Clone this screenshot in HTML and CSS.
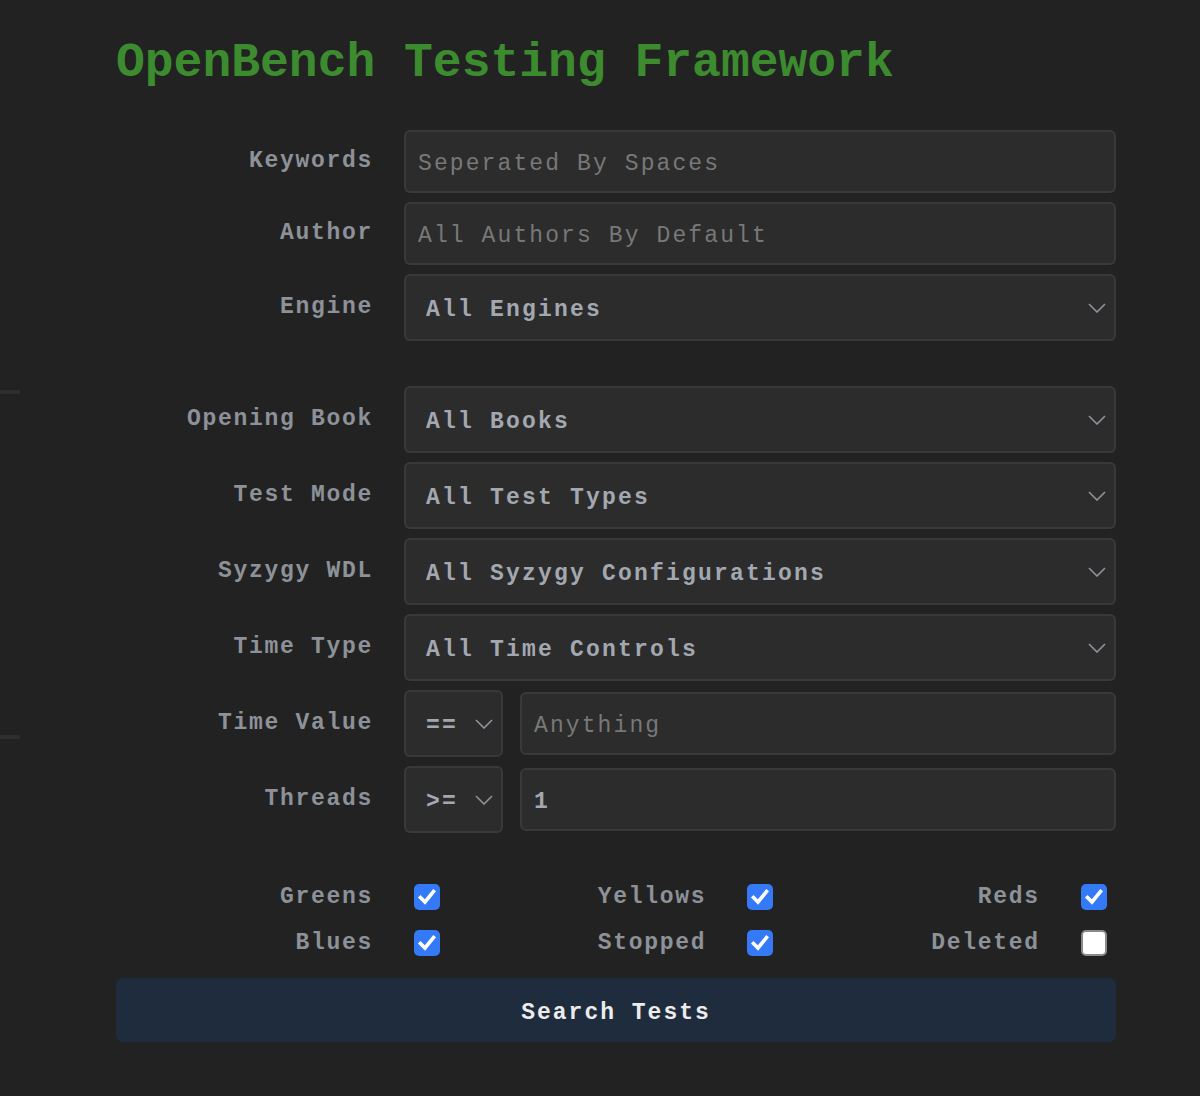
FILE: index.html
```html
<!DOCTYPE html>
<html>
<head>
<meta charset="utf-8">
<link rel="stylesheet" href="styles.css">
</head>
<body>
<div class="edge edge-a"></div>
<div class="edge edge-b"></div>
<main class="page">
  <h1 class="title">OpenBench Testing Framework</h1>
  <form class="form">
    <div class="row">
      <label class="label">Keywords</label>
      <input class="field" type="text" placeholder="Seperated By Spaces">
    </div>
    <div class="row">
      <label class="label">Author</label>
      <input class="field" type="text" placeholder="All Authors By Default">
    </div>
    <div class="row">
      <label class="label">Engine</label>
      <div class="select"><span>All Engines</span><svg class="chev" width="18" height="10" viewBox="0 0 18 10"><path d="M1 1 L9 9 L17 1" fill="none" stroke="#8e9299" stroke-width="1.6"/></svg></div>
    </div>
    <div class="row spaced">
      <label class="label">Opening Book</label>
      <div class="select"><span>All Books</span><svg class="chev" width="18" height="10" viewBox="0 0 18 10"><path d="M1 1 L9 9 L17 1" fill="none" stroke="#8e9299" stroke-width="1.6"/></svg></div>
    </div>
    <div class="row">
      <label class="label">Test Mode</label>
      <div class="select"><span>All Test Types</span><svg class="chev" width="18" height="10" viewBox="0 0 18 10"><path d="M1 1 L9 9 L17 1" fill="none" stroke="#8e9299" stroke-width="1.6"/></svg></div>
    </div>
    <div class="row">
      <label class="label">Syzygy WDL</label>
      <div class="select"><span>All Syzygy Configurations</span><svg class="chev" width="18" height="10" viewBox="0 0 18 10"><path d="M1 1 L9 9 L17 1" fill="none" stroke="#8e9299" stroke-width="1.6"/></svg></div>
    </div>
    <div class="row">
      <label class="label">Time Type</label>
      <div class="select"><span>All Time Controls</span><svg class="chev" width="18" height="10" viewBox="0 0 18 10"><path d="M1 1 L9 9 L17 1" fill="none" stroke="#8e9299" stroke-width="1.6"/></svg></div>
    </div>
    <div class="row">
      <label class="label">Time Value</label>
      <div class="pair">
        <div class="select small"><span>==</span><svg class="chev" width="18" height="10" viewBox="0 0 18 10"><path d="M1 1 L9 9 L17 1" fill="none" stroke="#8e9299" stroke-width="1.6"/></svg></div>
        <input class="field" type="text" placeholder="Anything">
      </div>
    </div>
    <div class="row">
      <label class="label">Threads</label>
      <div class="pair">
        <div class="select small"><span>&gt;=</span><svg class="chev" width="18" height="10" viewBox="0 0 18 10"><path d="M1 1 L9 9 L17 1" fill="none" stroke="#8e9299" stroke-width="1.6"/></svg></div>
        <input class="field value" type="text" value="1">
      </div>
    </div>

    <div class="checks">
      <div class="check"><span class="clabel">Greens</span><span class="box on"><svg width="26" height="26" viewBox="0 0 26 26"><path d="M6.5 13.5 L11 18 L19.5 7.5" fill="none" stroke="#fff" stroke-width="3.6" stroke-linecap="square"/></svg></span></div>
      <div class="check"><span class="clabel">Yellows</span><span class="box on"><svg width="26" height="26" viewBox="0 0 26 26"><path d="M6.5 13.5 L11 18 L19.5 7.5" fill="none" stroke="#fff" stroke-width="3.6" stroke-linecap="square"/></svg></span></div>
      <div class="check"><span class="clabel">Reds</span><span class="box on"><svg width="26" height="26" viewBox="0 0 26 26"><path d="M6.5 13.5 L11 18 L19.5 7.5" fill="none" stroke="#fff" stroke-width="3.6" stroke-linecap="square"/></svg></span></div>
      <div class="check"><span class="clabel">Blues</span><span class="box on"><svg width="26" height="26" viewBox="0 0 26 26"><path d="M6.5 13.5 L11 18 L19.5 7.5" fill="none" stroke="#fff" stroke-width="3.6" stroke-linecap="square"/></svg></span></div>
      <div class="check"><span class="clabel">Stopped</span><span class="box on"><svg width="26" height="26" viewBox="0 0 26 26"><path d="M6.5 13.5 L11 18 L19.5 7.5" fill="none" stroke="#fff" stroke-width="3.6" stroke-linecap="square"/></svg></span></div>
      <div class="check"><span class="clabel">Deleted</span><span class="box off"></span></div>
    </div>

    <button class="submit" type="button">Search Tests</button>
  </form>
</main>
</body>
</html>
```
FILE: styles.css
```css
html, body {
  margin: 0;
  padding: 0;
  background: #222222;
}
body {
  font-family: "Liberation Mono", "DejaVu Sans Mono", monospace;
  min-height: 1096px;
}
.edge {
  position: absolute;
  left: 0;
  width: 20px;
  height: 4px;
  background: #2e2e2e;
}
.edge-a { top: 390px; }
.edge-b { top: 735px; }

.page {
  width: 1000px;
  margin-left: 116px;
  padding-top: 39px;
}
.title {
  margin: 0;
  font-size: 48px;
  line-height: 48px;
  font-weight: bold;
  color: #3d8b2f;
  letter-spacing: 0;
  white-space: nowrap;
}
.form {
  margin-top: 43px;
  display: flex;
  flex-direction: column;
}
.row {
  display: grid;
  grid-template-columns: 288px 1fr;
  align-items: center;
  margin-bottom: 9px;
}
.row.spaced { margin-top: 36px; }
.label {
  text-align: right;
  padding-right: 31px;
  font-size: 23px;
  font-weight: bold;
  letter-spacing: 1.7px;
  color: #8d9198;
  line-height: 28px;
  margin-top: -1px;
}
.field {
  box-sizing: border-box;
  height: 63px;
  width: 100%;
  margin: 0;
  background: #2c2c2c;
  border: 2px solid #393939;
  border-radius: 6px;
  padding: 4px 12px 0;
  font-family: "Liberation Mono", "DejaVu Sans Mono", monospace;
  font-size: 23px;
  letter-spacing: 2.1px;
  color: #a3a8b0;
  outline: none;
}
.field::placeholder {
  color: #787878;
}
.select {
  box-sizing: border-box;
  height: 67px;
  background: #2c2c2c;
  border: 2px solid #393939;
  border-radius: 6px;
  padding: 0 8px 0 20px;
  display: flex;
  align-items: center;
  justify-content: space-between;
  font-size: 23px;
  font-weight: bold;
  letter-spacing: 2.2px;
  color: #a3a8b0;
}
.select span { margin-top: 5px; }
.chev { flex: none; }
.select.small {
  width: 99px;
  padding-right: 8px;
}
.pair {
  display: flex;
  align-items: center;
  gap: 17px;
}
.pair .field { flex: 1; }
.field.value { font-weight: bold; }

.checks {
  margin-top: 42px;
  display: grid;
  grid-template-columns: repeat(3, 1fr);
  row-gap: 20px;
}
.check {
  display: grid;
  grid-template-columns: 257px 26px;
  column-gap: 41px;
  align-items: center;
}
.clabel {
  text-align: right;
  font-size: 23px;
  font-weight: bold;
  letter-spacing: 1.7px;
  color: #8d9198;
  line-height: 26px;
  margin-top: -1px;
}
.box {
  box-sizing: border-box;
  width: 26px;
  height: 26px;
  border-radius: 5px;
  display: block;
}
.box svg { display: block; }
.box.on { background: #3479f6; }
.box.off {
  background: #ffffff;
  border: 2px solid #8a8a8a;
}
.submit {
  margin-top: 22px;
  height: 64px;
  width: 100%;
  border: none;
  border-radius: 7px;
  background: #1f2c3e;
  color: #ececec;
  font-family: "Liberation Mono", "DejaVu Sans Mono", monospace;
  font-size: 23px;
  font-weight: bold;
  letter-spacing: 2px;
  padding: 6px 0 0;
}
```
